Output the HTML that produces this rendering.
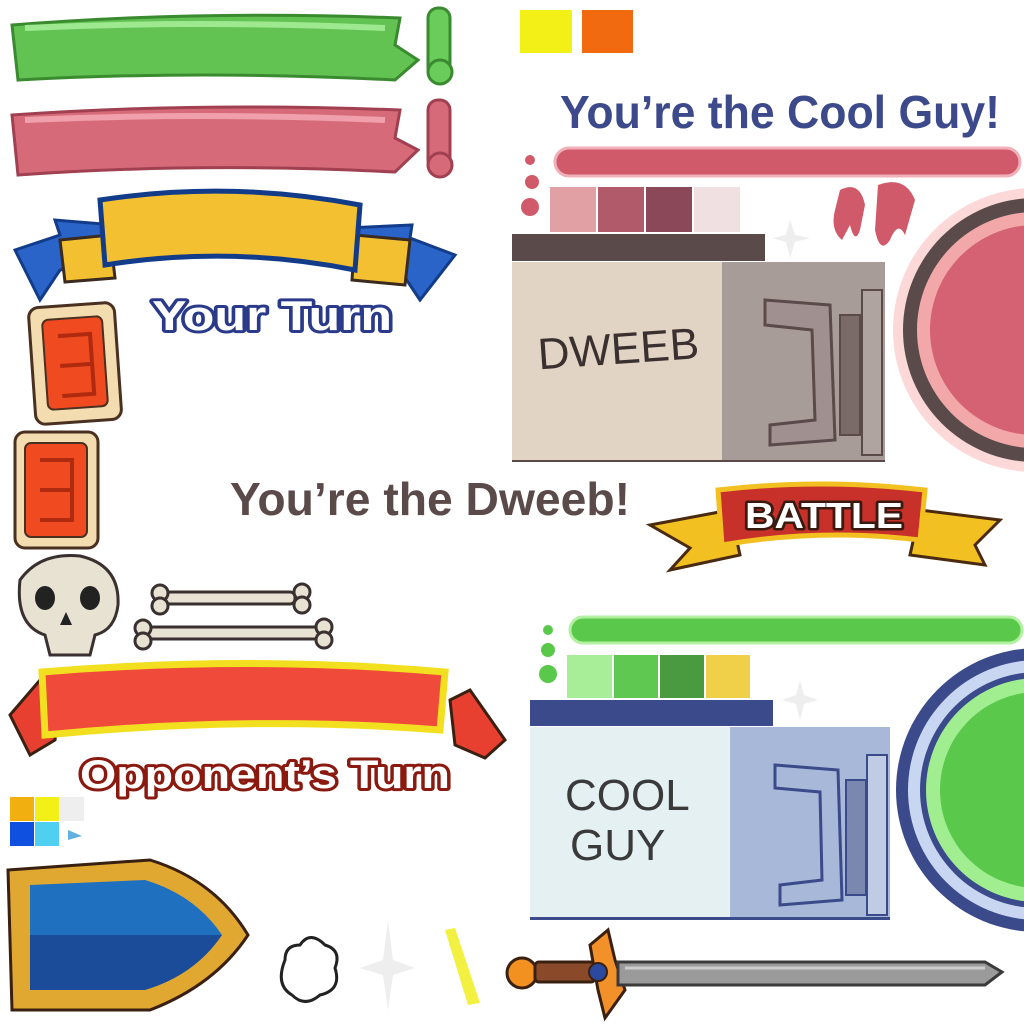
<!DOCTYPE html>
<html><head><meta charset="utf-8"><style>
html,body{margin:0;padding:0;background:#fff;width:1024px;height:1024px;overflow:hidden}
svg{display:block}
.t{font-family:"Liberation Sans",sans-serif;font-weight:bold;paint-order:stroke;stroke-linejoin:round}
.h{font-family:"Liberation Sans",sans-serif}
</style></head><body>
<svg width="1024" height="1024" viewBox="0 0 1024 1024" xmlns="http://www.w3.org/2000/svg">
<!-- green banner -->
<path d="M12 25 Q200 10 400 18 L395 45 L418 60 L395 80 Q200 70 18 80 Z" fill="#62c252" stroke="#3a8a30" stroke-width="3"/>
<path d="M25 28 Q200 20 385 28" stroke="#9ee890" stroke-width="6" fill="none"/>
<rect x="428" y="8" width="22" height="70" rx="10" fill="#6acc5a" stroke="#3a8a30" stroke-width="3"/>
<circle cx="440" cy="72" r="12" fill="#6acc5a" stroke="#3a8a30" stroke-width="3"/>
<!-- red banner -->
<path d="M12 115 Q200 102 400 110 L395 138 L418 150 L395 172 Q200 162 18 175 Z" fill="#d66a78" stroke="#a04050" stroke-width="3"/>
<path d="M25 120 Q200 112 385 120" stroke="#f0a0aa" stroke-width="6" fill="none"/>
<rect x="428" y="100" width="22" height="70" rx="10" fill="#d66a78" stroke="#a04050" stroke-width="3"/>
<circle cx="440" cy="165" r="12" fill="#d66a78" stroke="#a04050" stroke-width="3"/>
<!-- swatches top -->
<rect x="520" y="10" width="52" height="43" fill="#f2f016"/>
<rect x="582" y="10" width="51" height="43" fill="#f26a10"/>
<text x="560" y="128" class="t" font-size="46" fill="#3c4a8c" stroke="#fff" stroke-width="8" textLength="440" lengthAdjust="spacingAndGlyphs">You’re the Cool Guy!</text>
<!-- red goo -->
<rect x="555" y="148" width="465" height="28" rx="14" fill="#d05a6a" stroke="#f0b0b8" stroke-width="3"/>
<circle cx="530" cy="160" r="5" fill="#d05a6a"/><circle cx="532" cy="182" r="7" fill="#d05a6a"/><circle cx="530" cy="207" r="9" fill="#d05a6a"/>
<rect x="550" y="187" width="46" height="45" fill="#e0a0a4"/><rect x="598" y="187" width="46" height="45" fill="#b05a6a"/>
<rect x="646" y="187" width="46" height="45" fill="#8a4858"/><rect x="694" y="187" width="46" height="45" fill="#f0e0e2"/>
<path d="M840 190 Q860 180 865 205 L860 230 Q855 245 850 225 L842 240 Q830 230 835 210 Z" fill="#d05a6a"/>
<path d="M878 185 Q905 175 915 200 L905 235 Q898 220 890 240 Q880 255 875 230 Z" fill="#d05a6a"/>
<rect x="512" y="234" width="253" height="27" fill="#5a4a4a"/>
<rect x="512" y="262" width="373" height="200" fill="#a89c98"/>
<rect x="512" y="262" width="210" height="200" fill="#e2d4c4"/>
<rect x="512" y="460" width="373" height="2" fill="#5a4a4a"/>
<path d="M765 300 L830 305 L835 440 L770 445 L770 425 L815 420 L812 330 L765 325 Z" fill="#a09090" stroke="#5a4a4a" stroke-width="3"/>
<rect x="840" y="315" width="20" height="120" fill="#7a6a68" stroke="#5a4a4a" stroke-width="2"/>
<rect x="862" y="290" width="20" height="165" fill="#b0a4a0" stroke="#5a4a4a" stroke-width="2"/>
<text x="537" y="365" class="h" font-size="44" fill="#3a3030" transform="rotate(-4 600 340)">DWEEB</text>
<circle cx="1035" cy="330" r="142" fill="#fcd8d8"/>
<circle cx="1035" cy="330" r="132" fill="#5a4a4a"/>
<circle cx="1035" cy="330" r="118" fill="#f2a8a8"/>
<circle cx="1035" cy="330" r="105" fill="#d46272"/>
<!-- blue/yellow banner -->
<path d="M15 250 L60 235 L55 220 L115 225 L110 260 L60 270 L40 300 Z" fill="#2a64c8" stroke="#123c8a" stroke-width="3"/>
<path d="M455 255 L410 238 L412 225 L345 228 L350 265 L400 270 L420 300 Z" fill="#2a64c8" stroke="#123c8a" stroke-width="3"/>
<path d="M60 240 L110 235 L115 278 L65 282 Z" fill="#f2c030" stroke="#3a2a20" stroke-width="3"/>
<path d="M355 235 L410 240 L405 285 L352 280 Z" fill="#f2c030" stroke="#3a2a20" stroke-width="3"/>
<path d="M100 200 Q230 180 360 205 L355 270 Q230 245 105 265 Z" fill="#f2c030" stroke="#123c8a" stroke-width="5"/>
<text x="152" y="330" class="t" font-size="42" fill="#fff" stroke="#2a3a8a" stroke-width="6" textLength="240" lengthAdjust="spacingAndGlyphs">Your Turn</text>
<!-- tiles -->
<rect x="32" y="305" width="86" height="117" rx="10" fill="#f2dcb0" stroke="#4a3020" stroke-width="3" transform="rotate(-4 75 363)"/>
<rect x="45" y="318" width="60" height="90" rx="6" fill="#f04a20" stroke="#4a3020" stroke-width="2" transform="rotate(-4 75 363)"/>
<path d="M60 335 L92 335 L92 395 L60 395 M60 365 L90 365" fill="none" stroke="#b02a10" stroke-width="4" transform="rotate(-4 75 363)"/>
<rect x="15" y="432" width="83" height="116" rx="10" fill="#f2dcb0" stroke="#4a3020" stroke-width="3"/>
<rect x="25" y="443" width="62" height="94" rx="6" fill="#f04a20" stroke="#4a3020" stroke-width="2"/>
<path d="M40 460 L72 460 L72 520 L40 520 M40 490 L70 490" fill="none" stroke="#b02a10" stroke-width="4"/>
<text x="230" y="515" class="t" font-size="46" fill="#5a4a4a" stroke="#fff" stroke-width="8" textLength="400" lengthAdjust="spacingAndGlyphs">You’re the Dweeb!</text>
<!-- battle banner -->
<path d="M650 525 L730 510 L740 555 L670 570 L690 548 Z" fill="#f2c020" stroke="#4a2a10" stroke-width="3"/>
<path d="M1000 520 L920 510 L910 555 L985 565 L975 545 Z" fill="#f2c020" stroke="#4a2a10" stroke-width="3"/>
<path d="M718 490 Q820 478 925 490 L920 540 Q820 528 722 545 Z" fill="#c8302a" stroke="#f2c020" stroke-width="5"/>
<text x="745" y="528" class="t" font-size="36" fill="#fff" stroke="#3a1a10" stroke-width="5" textLength="158" lengthAdjust="spacingAndGlyphs">BATTLE</text>
<!-- skull & bones -->
<path d="M20 580 Q40 552 80 556 Q120 565 118 605 Q115 630 95 635 L90 655 L50 655 L45 635 Q15 625 20 580 Z" fill="#e8e2d2" stroke="#3a3030" stroke-width="3"/>
<ellipse cx="45" cy="598" rx="10" ry="12" fill="#222"/><ellipse cx="90" cy="598" rx="10" ry="12" fill="#222"/>
<path d="M66 612 L60 625 L72 625 Z" fill="#222"/>
<g fill="#e8e2d2" stroke="#3a3030" stroke-width="3">
<rect x="165" y="592" width="130" height="12" rx="5"/><circle cx="160" cy="593" r="8"/><circle cx="160" cy="606" r="8"/><circle cx="302" cy="592" r="8"/><circle cx="302" cy="605" r="8"/>
<rect x="148" y="627" width="172" height="12" rx="5"/><circle cx="143" cy="628" r="8"/><circle cx="143" cy="641" r="8"/><circle cx="324" cy="627" r="8"/><circle cx="324" cy="640" r="8"/>
</g>
<!-- red/yellow banner -->
<path d="M10 715 L40 680 L60 690 L55 740 L30 755 Z" fill="#e84030" stroke="#3a2010" stroke-width="3"/>
<path d="M505 740 L470 690 L450 700 L455 745 L485 758 Z" fill="#e84030" stroke="#3a2010" stroke-width="3"/>
<path d="M42 672 Q250 655 445 672 L440 730 Q250 715 45 735 Z" fill="#f04a3a" stroke="#f2e020" stroke-width="7"/>
<text x="80" y="788" class="t" font-size="40" fill="#fff" stroke="#8a1a10" stroke-width="6" textLength="370" lengthAdjust="spacingAndGlyphs">Opponent’s Turn</text>
<rect x="10" y="797" width="24" height="24" fill="#f2b010"/><rect x="35" y="797" width="24" height="24" fill="#f2f016"/><rect x="60" y="797" width="24" height="24" fill="#eee"/>
<rect x="10" y="822" width="24" height="24" fill="#1050e0"/><rect x="35" y="822" width="24" height="24" fill="#50d0f0"/>
<path d="M68 830 L82 836 L68 840 Z" fill="#60b0e0"/>
<!-- green goo -->
<rect x="570" y="617" width="452" height="26" rx="13" fill="#5ac84a" stroke="#b0f0a0" stroke-width="3"/>
<circle cx="548" cy="630" r="5" fill="#5ac84a"/><circle cx="548" cy="650" r="7" fill="#5ac84a"/><circle cx="548" cy="674" r="9" fill="#5ac84a"/>
<rect x="567" y="655" width="45" height="43" fill="#a8ee98"/><rect x="614" y="655" width="44" height="43" fill="#5ec850"/>
<rect x="660" y="655" width="44" height="43" fill="#4a9a40"/><rect x="706" y="655" width="44" height="43" fill="#f0d048"/>
<rect x="530" y="700" width="243" height="26" fill="#3a4a8a"/>
<rect x="530" y="727" width="360" height="193" fill="#a8b8d8"/>
<rect x="530" y="727" width="200" height="193" fill="#e4f0f2"/>
<rect x="530" y="917" width="360" height="3" fill="#3a4a8a"/>
<path d="M775 765 L838 770 L842 900 L780 905 L780 885 L822 880 L820 792 L775 788 Z" fill="#a8b8d8" stroke="#3a4a8a" stroke-width="3"/>
<rect x="846" y="780" width="20" height="115" fill="#7a88b0" stroke="#3a4a8a" stroke-width="2"/>
<rect x="867" y="755" width="20" height="160" fill="#c0cce4" stroke="#3a4a8a" stroke-width="2"/>
<text x="565" y="810" class="h" font-size="44" fill="#3a3a3a">COOL</text>
<text x="570" y="860" class="h" font-size="44" fill="#3a3a3a">GUY</text>
<circle cx="1038" cy="790" r="142" fill="#3a4a8a"/>
<circle cx="1038" cy="790" r="130" fill="#c8d6f2"/>
<circle cx="1038" cy="790" r="118" fill="#3a4a8a"/>
<circle cx="1038" cy="790" r="112" fill="#a0ee90"/>
<circle cx="1038" cy="790" r="98" fill="#5ac84a"/>
<!-- shield -->
<path d="M8 870 L150 860 Q215 880 248 935 Q215 985 150 1010 L12 1010 Z" fill="#e0a830" stroke="#3a2010" stroke-width="3"/>
<path d="M30 885 L145 880 Q195 895 222 935 L30 935 Z" fill="#2070c0"/>
<path d="M30 935 L222 935 Q195 975 145 990 L30 990 Z" fill="#1a4c9a"/>
<!-- cloud, sparkle, stripe -->
<path d="M285 960 Q285 945 300 945 Q310 930 325 945 Q342 950 335 968 Q342 990 320 995 Q305 1008 292 995 Q275 985 285 960 Z" fill="#fff" stroke="#222" stroke-width="3"/>
<path d="M388 920 L393 960 L415 968 L393 975 L388 1010 L383 975 L360 968 L383 960 Z" fill="#eee"/>
<path d="M445 930 L455 928 L480 1003 L468 1005 Z" fill="#f2f040"/>
<path d="M790 220 L795 235 L810 238 L795 242 L790 258 L786 242 L772 238 L786 235 Z" fill="#eee"/>
<path d="M800 680 L804 695 L818 700 L804 704 L800 720 L796 704 L782 700 L796 695 Z" fill="#eee"/>
<!-- sword -->
<circle cx="522" cy="973" r="15" fill="#f29020" stroke="#3a2010" stroke-width="3"/>
<rect x="535" y="962" width="60" height="20" rx="4" fill="#8a4a2a" stroke="#3a2010" stroke-width="3"/>
<path d="M590 945 L608 930 L615 960 L625 990 L605 1018 L598 990 Z" fill="#f2902a" stroke="#3a2010" stroke-width="3"/>
<circle cx="598" cy="972" r="9" fill="#2a4aa0" stroke="#3a2010" stroke-width="2"/>
<path d="M618 962 L985 962 L1002 972 L985 985 L618 985 Z" fill="#9a9a9a" stroke="#3a3a3a" stroke-width="3"/>
<path d="M625 968 L985 968" stroke="#ccc" stroke-width="3"/>
</svg>
</body></html>
